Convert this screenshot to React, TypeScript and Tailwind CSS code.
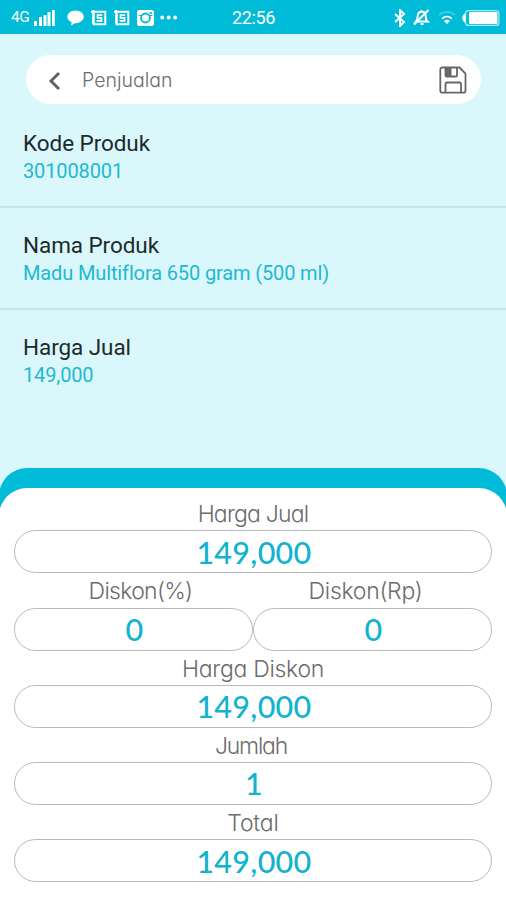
import type { ReactNode } from "react"

function StatusBar() {
    return (
        <div className="flex h-[34px] items-center bg-[#00bcd8] pt-px text-white">
            <div className="flex flex-1 items-center pl-[11px]">
                <span className="w-[20px] font-['Roboto'] text-[15.5px] tracking-[-0.5px]">4G</span>
                <svg className="ml-[3px]" width="21" height="16" viewBox="0 0 21 16" fill="currentColor">
                    <rect x="0" y="11" width="3" height="5" />
                    <rect x="5" y="7" width="3" height="9" />
                    <rect x="9.5" y="5" width="3" height="11" />
                    <rect x="13.500" y="2" width="3" height="14" />
                    <rect x="18" y="0" width="2.800" height="16" />
                </svg>
                <svg className="ml-[12px]" width="17" height="16" viewBox="0 0 17 16" fill="currentColor">
                    <path d="M8.5 0.5C4 .5 .4 3.3.4 6.8c0 2.300 1.600 4.300 4.200 5.400L4 15.500l4-2.300c4.900.1 8.700-2.700 8.700-6.400C16.700 3.300 13 .5 8.500.5z" />
                </svg>
                <NoteIcon />
                <NoteIcon />
                <svg className="ml-[7px]" width="17" height="16" viewBox="0 0 17 16">
                    <rect width="17" height="16" rx="2.500" fill="#fff" />
                    <path d="M1.700 5.500h3M12.300 5.500h3" stroke="#00bcd8" strokeWidth="1.200" />
                    <circle cx="8.500" cy="8" r="4.500" fill="#fff" stroke="#00bcd8" strokeWidth="1.800" />
                    <circle cx="13.700" cy="2.900" r="1.200" fill="#00bcd8" />
                </svg>
                <svg className="ml-[6px]" width="18" height="5" viewBox="0 0 18 5" fill="currentColor">
                    <circle cx="2.200" cy="2.500" r="1.900" />
                    <circle cx="8.700" cy="2.500" r="1.900" />
                    <circle cx="15.200" cy="2.500" r="1.900" />
                </svg>
            </div>
            <span className="mr-[4px] font-['Roboto'] text-[18px] tracking-[-0.4px]">22:56</span>
            <div className="flex flex-1 items-center justify-end pr-[6px]">
                <svg width="12" height="18" viewBox="0 0 12 18" fill="none" stroke="currentColor" strokeWidth="2">
                    <path d="M1 5l9 8-4 4V1l4 4-9 8" />
                </svg>
                <svg className="ml-[7px]" width="17" height="17" viewBox="0 0 17 17" fill="none" stroke="currentColor" strokeWidth="2">
                    <path d="M3 12.500h11.500c-1.600-1.400-1.800-3-1.800-5.500 0-2.700-1.500-4.300-3.900-4.300S4.800 4.500 4.700 7.100C4.700 9.600 4.500 11 3 12.500z" />
                    <path d="M15.500 1L1 15.500M7.500 15h3M8.700 1v2" />
                </svg>
                <svg className="ml-[8px]" width="18" height="15" viewBox="0 0 18 15" fill="none" stroke="currentColor" strokeWidth="1.700">
                    <path d="M1 5.200c4.500-4.400 11.500-4.400 16 0" strokeOpacity="0.250" />
                    <path d="M4.200 8.600c2.800-2.700 6.800-2.700 9.600 0" />
                    <path d="M6 10.900c1.800-1.400 4.200-1.400 6 0L9 14z" fill="currentColor" stroke="none" />
                </svg>
                <svg className="ml-[6px]" width="38" height="16" viewBox="0 0 38 16">
                    <rect x="3.500" y=".6" width="33.500" height="14.800" rx="3" fill="none" stroke="#fff" strokeOpacity="0.650" strokeWidth="1.200" />
                    <path d="M3.500 3C1 4.500.3 6.400.3 8s.7 3.500 3.200 5z" fill="#fff" />
                    <rect x="7" y="2" width="28.500" height="12" rx="1" fill="#fff" />
                </svg>
            </div>
        </div>
    )
}

function NoteIcon() {
    return (
        <svg className="ml-[7px]" width="16" height="16" viewBox="0 0 16 16" fill="none" stroke="currentColor">
            <path d="M1.800 1.700h12.500v12.500H2.700V1.700" strokeWidth="2" />
            <path d="M0 1.700h3M2.200 0v14" strokeWidth="2" />
            <path d="M11.200 5.200H6.500v2.600h4v3.100H5.600" strokeWidth="1.700" />
        </svg>
    )
}

function ProductRow({ title, value }: { title: string; value: string }) {
    return (
        <div className="h-[102px] border-b-2 border-[#c6e4e9] px-[23px] pt-[23px] font-['Roboto'] last:border-0">
            <p className="text-[22.500px] leading-[28px] tracking-[-0.07px] text-[#20292b]">{title}</p>
            <p className="text-[20px] leading-[28px] tracking-[-0.13px] text-[#1eb9d1]">{value}</p>
        </div>
    )
}

function Field({ label, labelClass = "", children }: { label: string; labelClass?: string; children: ReactNode }) {
    return (
        <div className="min-w-0 flex-1">
            <p className="h-[34.300px] pt-px text-center font-['Inter'] text-[23px] leading-[34px] font-light text-[#6c6c6c] [font-feature-settings:'cv11']">
                <span className={labelClass}>{label}</span>
            </p>
            <div className="flex h-[43px] items-center justify-center rounded-full border border-[#b9b9b9] pl-[2px] font-['Lato'] text-[30.500px] leading-none font-medium tracking-[0.300px] text-[#12b3ce]">
                {children}
            </div>
        </div>
    )
}

export default function App() {

    return (

    <div className="flex h-[900px] w-[506px] flex-col overflow-hidden bg-[#daf7fc]">

        <StatusBar />

        <div className="mx-[26px] mt-[21px] flex h-[49px] w-[455px] shrink-0 items-center rounded-full bg-white pr-[14px] pl-[22px]">
            <svg className="mt-[3px]" width="13" height="20" viewBox="0 0 13 20" fill="none" stroke="#626262" strokeWidth="3">
                <path d="M11 2L3 10l8 8" />
            </svg>
            <span className="mt-[3px] ml-[21px] flex-1 font-['Inter'] text-[19.500px] font-light text-[#6c6c6c] [font-feature-settings:'cv11']">Penjualan</span>
            <svg width="28" height="28" viewBox="0 0 28 28" fill="none" stroke="#666" strokeWidth="1.800">
                <path d="M3.300 1.500h17.200l6 6v17.200a2 2 0 0 1-2 2H3.300a2 2 0 0 1-2-2V3.500a2 2 0 0 1 2-2z" />
                <path d="M6.500 1.500v8a1 1 0 0 0 1 1h9.500a1 1 0 0 0 1-1v-8" />
                <path d="M6.500 26.500V18a1.500 1.500 0 0 1 1.500-1.500h12.500A1.500 1.500 0 0 1 22 18v8.500" />
                <path d="M7 2h5.500v8H7z" fill="#666" stroke="none" />
            </svg>
        </div>

        <div className="h-[364px] shrink-0 pt-[2px]">
            <ProductRow title="Kode Produk" value="301008001" />
            <ProductRow title="Nama Produk" value="Madu Multiflora 650 gram (500 ml)" />
            <ProductRow title="Harga Jual" value="149,000" />
        </div>

        <div className="-mx-px flex-1 rounded-t-[28px] bg-[#00bcd8] pt-[20px]">
            <div className="h-full rounded-t-[28px] bg-white px-[15px] pt-[8px]">
                <Field label="Harga Jual" labelClass="tracking-[-0.8px]">149,000</Field>
                <div className="flex">
                    <Field label="Diskon(%)" labelClass="relative left-[7px] tracking-[-0.7px]">0</Field>
                    <Field label="Diskon(Rp)" labelClass="relative -left-[7px] tracking-[-0.3px]">0</Field>
                </div>
                <Field label="Harga Diskon" labelClass="tracking-[-0.3px]">149,000</Field>
                <Field label="Jumlah" labelClass="relative -left-[2px] tracking-[-1.2px]">1</Field>
                <Field label="Total" labelClass="tracking-[-0.2px]">149,000</Field>
            </div>
        </div>

    </div>

    )

}
